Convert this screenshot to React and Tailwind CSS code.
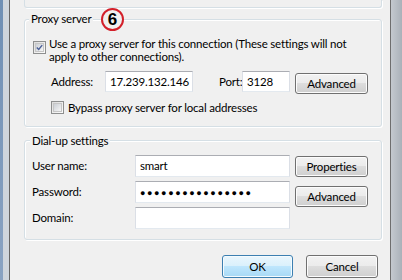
import React from 'react';

const btn =
  'flex items-center justify-center rounded-[3px] border border-[#707070] bg-[linear-gradient(#f2f2f2,#ebebeb_50%,#dddddd_50%,#cfcfcf)] shadow-[inset_0_0_0_1px_#fcfcfc] leading-none';
const field = 'flex items-center border border-[#abadb3] border-x-[#dbdfe6] border-b-[#e3e9ef] bg-white px-[4px] leading-none';
const group = 'relative rounded-[3px] border border-[#d5dfe5] shadow-[inset_1px_1px_0_#fff,1px_1px_0_#fff]';

function CheckBox({ checked }) {
  return (
    <div className="flex h-[13px] w-[13px] shrink-0 items-center justify-center border border-[#8e8f8f] bg-[linear-gradient(135deg,#dcdcdc,#fdfdfd)] p-[1px]">
      <div className="flex h-full w-full items-center justify-center border border-[#c6c6c6] bg-[linear-gradient(135deg,#cbcfd5,#f6f6f6)]">
        {checked && (
          <svg width="9" height="9" viewBox="0 0 9 9">
            <path d="M1 4.5 L3.5 7 L8 1.5" fill="none" stroke="#4a5f97" strokeWidth="1.8" />
          </svg>
        )}
      </div>
    </div>
  );
}

export default function App() {
  return (
    <div className="flex h-[280px] w-[402px] overflow-hidden bg-[#f0f0f0] font-['Lato',sans-serif] text-[11.5px] tracking-[-0.18px] text-black">
      {/* left window frame */}
      <div className="flex w-[10px] shrink-0">
        <div className="w-[3px] bg-[linear-gradient(#6f8fb4,#8aa3c2)]" />
        <div className="w-[6px] bg-[#cfd5dc]" />
        <div className="w-[1px] bg-[#646464]" />
      </div>

      <div className="flex flex-1 flex-col pl-[14px] pr-[8px]">
        {/* previous group (cut off) */}
        <div className="h-[8px] shrink-0 rounded-b-[3px] border border-t-0 border-[#d5dfe5] shadow-[1px_1px_0_#fff]" />

        {/* Proxy server */}
        <div className={`${group} mt-[11px] h-[108px] shrink-0`}>
          <div className="absolute -top-[8px] left-[4px] bg-[#f0f0f0] px-[2px] leading-[14px]">Proxy server</div>
          <div className="absolute -top-[12px] left-[76px] flex h-[23px] w-[23px] items-center justify-center rounded-full border-2 border-[#d3202a] bg-[#f0f0f0] font-['Liberation_Sans',sans-serif] text-[17px] font-bold leading-none tracking-normal">
            6
          </div>

          <div className="ml-[8px] mt-[17px] flex items-start gap-[3px]">
            <div className="mt-[4px]">
              <CheckBox checked />
            </div>
            <div className="whitespace-nowrap leading-[13px]">
              <div>Use a proxy server for this connection (These settings will not</div>
              <div>apply to other connections).</div>
            </div>
          </div>

          <div className="ml-[26px] mt-[8px] flex items-start">
            <div className="flex h-[21px] w-[54px] shrink-0 items-center">Address:</div>
            <div className={`${field} h-[21px] w-[88px] shrink-0 overflow-hidden whitespace-nowrap`}>17.239.132.146</div>
            <div className="ml-[26px] flex h-[21px] w-[23px] shrink-0 items-center whitespace-nowrap">Port:</div>
            <div className={`${field} h-[21px] w-[48px] shrink-0`}>3128</div>
            <div className={`${btn} ml-[5px] mt-[2px] h-[21px] w-[73px] shrink-0`}>Advanced</div>
          </div>

          <div className="ml-[26px] mt-[7px] flex items-center gap-[4px]">
            <CheckBox />
            <div className="leading-[13px]">Bypass proxy server for local addresses</div>
          </div>
        </div>

        {/* Dial-up settings */}
        <div className={`${group} mt-[13px] h-[100px] shrink-0`}>
          <div className="absolute -top-[7px] left-[5px] bg-[#f0f0f0] px-[2px] leading-[14px]">Dial-up settings</div>

          <div className="ml-[7px] mt-[14px] flex items-start">
            <div className="flex h-[22px] w-[103px] items-center">User name:</div>
            <div className={`${field} h-[22px] w-[155px]`}>smart</div>
            <div className={`${btn} ml-[5px] mt-[1px] h-[21px] w-[73px]`}>Properties</div>
          </div>

          <div className="ml-[7px] mt-[4px] flex items-start">
            <div className="flex h-[22px] w-[103px] items-center">Password:</div>
            <div className={`${field} h-[22px] w-[155px] font-['Noto_Sans',sans-serif] text-[9px] tracking-[1.6px]`}>●●●●●●●●●●●●●●●●</div>
            <div className={`${btn} ml-[5px] mt-[5px] h-[21px] w-[73px]`}>Advanced</div>
          </div>

          <div className="ml-[7px] flex items-start">
            <div className="flex h-[22px] w-[103px] items-center">Domain:</div>
            <div className={`${field} h-[22px] w-[155px]`} />
          </div>
        </div>

        {/* buttons */}
        <div className="mt-[15px] mr-[4px] flex justify-end gap-[13px]">
          <div className="flex h-[23px] w-[71px] items-center justify-center rounded-[3px] border border-[#3c7fb1] bg-[linear-gradient(#eaf6fd,#d9f0fc_50%,#bee6fd_50%,#a7d9f5)] shadow-[inset_0_0_0_1px_#f4fbfe]">
            OK
          </div>
          <div className={`${btn} h-[23px] w-[72px]`}>Cancel</div>
        </div>
      </div>

      {/* right window frame */}
      <div className="flex w-[12px] shrink-0">
        <div className="w-[1px] bg-[#6e6e6e]" />
        <div className="flex-1 bg-[linear-gradient(90deg,#c4c9cf,#aab1b9)]" />
      </div>
    </div>
  );
}
